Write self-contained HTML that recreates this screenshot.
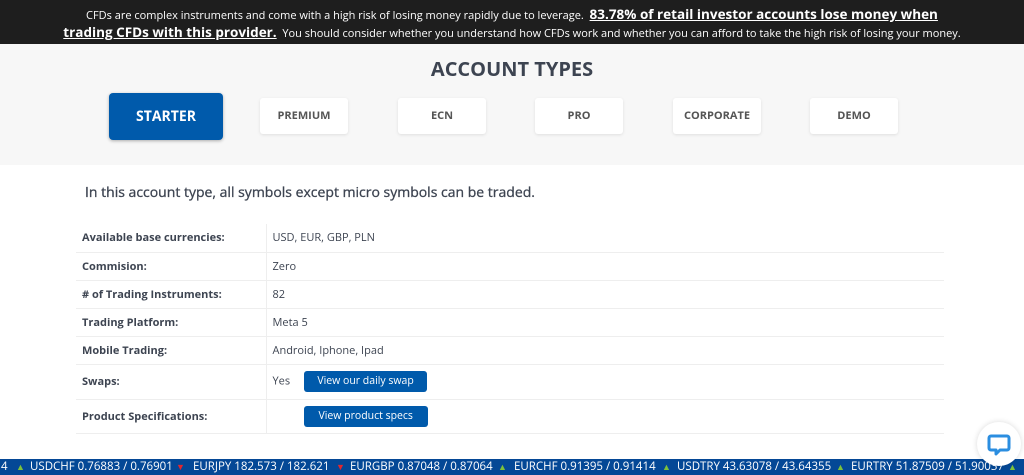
<!DOCTYPE html>
<html><head><style>
*{margin:0;padding:0;box-sizing:border-box}
body{width:1024px;height:475px;overflow:hidden;background:#fff;font-family:"Open Sans","Liberation Sans",sans-serif;position:relative;color:#3d4451}
.top{position:absolute;left:0;top:0;width:1024px;height:44px;background:#1e1e1e;color:#fff;text-align:center;font-size:11px;line-height:17px;padding-top:6px}
.top b{font-size:13.5px;text-decoration:underline}
.gray{position:absolute;top:44px;left:0;width:1024px;height:121px;background:#f7f7f7}
h1{position:absolute;top:55px;width:1024px;text-align:center;font-size:20px;font-weight:bold;color:#3d4451}
.tab{position:absolute;top:98px;height:36px;width:88px;background:#fff;border-radius:3px;box-shadow:0 1px 3px rgba(0,0,0,.1);font-size:11px;font-weight:bold;color:#555;text-align:center;line-height:36px}
.act{top:93px;left:109px;width:114px;height:47px;line-height:47px;background:#005aab;color:#fff;font-size:14px;border-radius:4px;box-shadow:0 1px 3px rgba(0,0,0,.3)}
.intro{position:absolute;top:183px;left:85px;font-size:14px;color:#3d4451;-webkit-text-stroke:0.3px #3d4451}
table{position:absolute;top:224px;left:76px;width:868px;border-collapse:collapse;font-size:11px}
td{border-bottom:1px solid #eee;height:28px;padding-left:6px}
td:first-child{width:190px;font-weight:bold;border-right:1px solid #eee}
.btn{display:inline-block;background:#005aab;color:#fff;border-radius:3px;height:21px;line-height:21px;padding:0 13px;font-size:10.5px;vertical-align:middle}
.tk{position:absolute;top:459px;left:0;width:1024px;height:16px;background:#044896;color:#fff;font-size:11.5px;line-height:16px;white-space:nowrap;overflow:hidden}
.tk span{position:absolute;top:0}
.up{color:#7cc13a;font-size:9px}.dn{color:#e3262d;font-size:9px}
.chat{position:absolute;left:977px;top:422px;width:44px;height:44px;border-radius:50%;background:#fff;box-shadow:0 0 6px rgba(0,0,0,.15)}
</style></head><body>
<div class="top">CFDs are complex instruments and come with a high risk of losing money rapidly due to leverage. &nbsp;<b>83.78% of retail investor accounts lose money when</b><br><b>trading CFDs with this provider.</b>&nbsp; You should consider whether you understand how CFDs work and whether you can afford to take the high risk of losing your money.</div>
<div class="gray"></div>
<h1>ACCOUNT TYPES</h1>
<div class="tab act">STARTER</div>
<div class="tab" style="left:260px">PREMIUM</div>
<div class="tab" style="left:398px">ECN</div>
<div class="tab" style="left:535px">PRO</div>
<div class="tab" style="left:673px">CORPORATE</div>
<div class="tab" style="left:810px">DEMO</div>
<div class="intro">In this account type, all symbols except micro symbols can be traded.</div>
<table>
<tr><td>Available base currencies:</td><td>USD, EUR, GBP, PLN</td></tr>
<tr><td>Commision:</td><td>Zero</td></tr>
<tr><td># of Trading Instruments:</td><td>82</td></tr>
<tr><td>Trading Platform:</td><td>Meta 5</td></tr>
<tr><td>Mobile Trading:</td><td>Android, Iphone, Ipad</td></tr>
<tr><td style="height:35px">Swaps:</td><td>Yes &nbsp; &nbsp; <span class="btn">View our daily swap</span></td></tr>
<tr><td style="height:34px">Product Specifications:</td><td style="padding-left:37px"><span class="btn" style="padding:0 15px">View product specs</span></td></tr>
</table>
<div class="tk">
<span style="left:1px">4</span>
<span class="up" style="left:16px">▲</span><span style="left:30px">USDCHF 0.76883 / 0.76901</span>
<span class="dn" style="left:176px">▼</span><span style="left:193px">EURJPY 182.573 / 182.621</span>
<span class="dn" style="left:336px">▼</span><span style="left:350px">EURGBP 0.87048 / 0.87064</span>
<span class="up" style="left:498px">▲</span><span style="left:514px">EURCHF 0.91395 / 0.91414</span>
<span class="up" style="left:662px">▲</span><span style="left:677px">USDTRY 43.63078 / 43.64355</span>
<span class="up" style="left:836px">▲</span><span style="left:851px">EURTRY 51.87509 / 51.90037</span>
<span class="up" style="left:1008px">▲</span>
</div>
<div class="chat"><svg width="44" height="44" viewBox="0 0 44 44"><path d="M14 14h16a2 2 0 0 1 2 2v10a2 2 0 0 1-2 2h-7l-4 4v-4h-5a2 2 0 0 1-2-2V16a2 2 0 0 1 2-2z" fill="none" stroke="#2b8ee0" stroke-width="3" stroke-linejoin="round"/></svg></div>
</body></html>
